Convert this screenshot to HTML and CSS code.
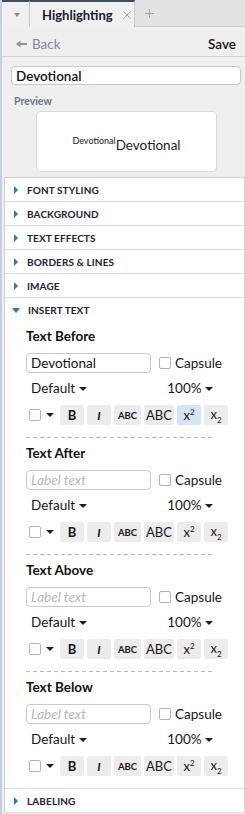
FILE: index.html
```html
<!DOCTYPE html>
<html lang="en">
<head>
    <meta charset="UTF-8">
    <meta name="viewport" content="width=device-width, initial-scale=1.0">
    <title>Highlighting</title>
    <link rel="stylesheet" href="styles.css">
</head>
<body>
    <div class="panel">
        <div class="tabs">
            <div class="tab-menu"><span class="tri-down grey"></span></div>
            <div class="tab active">
                <span>Highlighting</span>
                <svg class="close" width="8" height="8" viewBox="0 0 8 8"><path d="M0.5 0.5 L7.5 7.5 M7.5 0.5 L0.5 7.5" stroke="#a3a3a3" stroke-width="1"/></svg>
            </div>
            <div class="tab-add">
                <svg width="9" height="9" viewBox="0 0 9 9"><path d="M4.5 0 V9 M0 4.5 H9" stroke="#a3a3a3" stroke-width="1"/></svg>
            </div>
        </div>

        <div class="topbar">
            <a class="back">
                <svg width="11" height="8" viewBox="0 0 11 8"><path d="M0 4 L4.5 0.5 V3 H11 V5 H4.5 V7.5 Z" fill="#8794a3"/></svg>
                Back
            </a>
            <span class="save">Save</span>
        </div>

        <input class="name" type="text" value="Devotional">
        <div class="preview-label">Preview</div>
        <div class="preview">
            <span class="sample"><sup>Devotional</sup>Devotional</span>
        </div>

        <div class="sections">
            <div class="section"><div class="section-head"><span class="tri-right"></span>Font Styling</div></div>
            <div class="section"><div class="section-head"><span class="tri-right"></span>Background</div></div>
            <div class="section"><div class="section-head"><span class="tri-right"></span>Text Effects</div></div>
            <div class="section"><div class="section-head"><span class="tri-right"></span>Borders &amp; Lines</div></div>
            <div class="section"><div class="section-head"><span class="tri-right"></span>Image</div></div>

            <div class="section open">
                <div class="section-head"><span class="tri-down blue"></span>Insert Text</div>
                <div class="section-body">

                    <div class="insert">
                        <div class="insert-title">Text Before</div>
                        <div class="insert-row">
                            <input class="label-input" type="text" value="Devotional" placeholder="Label text">
                            <span class="check"></span>
                            <span class="check-label">Capsule</span>
                        </div>
                        <div class="font-row">
                            <span>Default <span class="tri-down"></span></span>
                            <span>100% <span class="tri-down"></span></span>
                        </div>
                        <div class="toolbar">
                            <span class="check"></span><span class="tri-down small"></span>
                            <span class="btn bold">B</span>
                            <span class="btn italic">I</span>
                            <span class="btn caps">ABC</span>
                            <span class="btn upper">ABC</span>
                            <span class="btn script active"><span>x<sup>2</sup></span></span>
                            <span class="btn script"><span>x<sub>2</sub></span></span>
                        </div>
                    </div>

                    <div class="divider"></div>

                    <div class="insert">
                        <div class="insert-title">Text After</div>
                        <div class="insert-row">
                            <input class="label-input" type="text" placeholder="Label text">
                            <span class="check"></span>
                            <span class="check-label">Capsule</span>
                        </div>
                        <div class="font-row">
                            <span>Default <span class="tri-down"></span></span>
                            <span>100% <span class="tri-down"></span></span>
                        </div>
                        <div class="toolbar">
                            <span class="check"></span><span class="tri-down small"></span>
                            <span class="btn bold">B</span>
                            <span class="btn italic">I</span>
                            <span class="btn caps">ABC</span>
                            <span class="btn upper">ABC</span>
                            <span class="btn script"><span>x<sup>2</sup></span></span>
                            <span class="btn script"><span>x<sub>2</sub></span></span>
                        </div>
                    </div>

                    <div class="divider"></div>

                    <div class="insert">
                        <div class="insert-title">Text Above</div>
                        <div class="insert-row">
                            <input class="label-input" type="text" placeholder="Label text">
                            <span class="check"></span>
                            <span class="check-label">Capsule</span>
                        </div>
                        <div class="font-row">
                            <span>Default <span class="tri-down"></span></span>
                            <span>100% <span class="tri-down"></span></span>
                        </div>
                        <div class="toolbar">
                            <span class="check"></span><span class="tri-down small"></span>
                            <span class="btn bold">B</span>
                            <span class="btn italic">I</span>
                            <span class="btn caps">ABC</span>
                            <span class="btn upper">ABC</span>
                            <span class="btn script"><span>x<sup>2</sup></span></span>
                            <span class="btn script"><span>x<sub>2</sub></span></span>
                        </div>
                    </div>

                    <div class="divider"></div>

                    <div class="insert">
                        <div class="insert-title">Text Below</div>
                        <div class="insert-row">
                            <input class="label-input" type="text" placeholder="Label text">
                            <span class="check"></span>
                            <span class="check-label">Capsule</span>
                        </div>
                        <div class="font-row">
                            <span>Default <span class="tri-down"></span></span>
                            <span>100% <span class="tri-down"></span></span>
                        </div>
                        <div class="toolbar">
                            <span class="check"></span><span class="tri-down small"></span>
                            <span class="btn bold">B</span>
                            <span class="btn italic">I</span>
                            <span class="btn caps">ABC</span>
                            <span class="btn upper">ABC</span>
                            <span class="btn script"><span>x<sup>2</sup></span></span>
                            <span class="btn script"><span>x<sub>2</sub></span></span>
                        </div>
                    </div>

                </div>
            </div>

            <div class="section"><div class="section-head"><span class="tri-right"></span>Labeling</div></div>
        </div>
    </div>
</body>
</html>
```

FILE: styles.css
```css
* {
    box-sizing: border-box;
}

body {
    margin: 0;
    font-family: Lato, "Open Sans", sans-serif;
    font-size: 13px;
    color: #1c2230;
    background: #c6cfdf;
    overflow: hidden;
}

.panel {
    margin-left: 2px;
    min-height: 814px;
    background: #efefef;
}

/* tab strip */
.tabs {
    display: flex;
    height: 27px;
    background: #e2e2e2;
}

.tab-menu {
    width: 28px;
    background: #f0f0f0;
    border-top: 2px solid #3f4c5e;
    border-right: 1px solid #c8c8c8;
    display: flex;
    align-items: center;
    justify-content: center;
    padding-left: 2px;
}

.tab {
    width: 105px;
    display: flex;
    align-items: center;
    padding-left: 12px;
    background: #f0f0f0;
    border-top: 2px solid #3f4c5e;
    border-right: 1px solid #c8c8c8;
    font-weight: 700;
    font-size: 13px;
    color: #161c2a;
}

.tab .close {
    flex: none;
    margin-left: 10px;
}

.tab-add {
    flex: 1;
    display: flex;
    align-items: center;
    padding-left: 10px;
    border-bottom: 1px solid #cdcdcd;
}

.topbar {
    height: 30px;
    padding: 4px 9px 0 14px;
    display: flex;
    align-items: center;
    justify-content: space-between;
    border-bottom: 1px solid #d3d3d3;
    font-size: 13.5px;
}

.back {
    color: #7c8999;
    display: flex;
    align-items: center;
    gap: 5px;
}

.save {
    font-weight: 600;
    color: #151515;
}

.name {
    display: block;
    margin: 9px 4px 0 9px;
    width: 230px;
    height: 19px;
    padding: 0 4px;
    border: 1px solid #c9c9c9;
    border-radius: 4px;
    background: white;
    font-family: inherit;
    font-size: 13.5px;
    font-weight: 600;
    color: #111;
    outline: none;
}

.preview-label {
    margin: 9px 0 0 12px;
    line-height: 14px;
    font-size: 10.5px;
    font-weight: 700;
    color: #6c7686;
}

.preview {
    margin: 3px 0 0 34px;
    width: 181px;
    height: 61px;
    background: white;
    border: 1px solid #d9d9d9;
    border-radius: 4px;
    display: flex;
    align-items: center;
    justify-content: center;
}

.sample {
    font-size: 13.5px;
    color: #222;
    padding-top: 4px;
}

.sample sup {
    font-size: 9px;
    vertical-align: 6px;
}

/* accordion */
.sections {
    margin: 5px 0 0 2px;
    background: white;
    border-top: 1px solid #d2d2d2;
    border-left: 1px solid #cfcfcf;
    border-right: 1px solid #d6d6d6;
}

.section-head {
    height: 24px;
    display: flex;
    align-items: center;
    padding-left: 9px;
    border-bottom: 1px solid #dcdcdc;
    text-transform: uppercase;
    font-size: 10px;
    font-weight: 700;
    letter-spacing: 0.1px;
    color: #1c2333;
}

.section.open .section-head {
    border-bottom: none;
    padding-left: 7px;
}

.section.open {
    border-bottom: 1px solid #dcdcdc;
}

.tri-right {
    flex: none;
    width: 0;
    height: 0;
    border-top: 4px solid transparent;
    border-bottom: 4px solid transparent;
    border-left: 4px solid #2a79c9;
    margin-right: 9px;
}

.tri-down {
    flex: none;
    display: inline-block;
    width: 0;
    height: 0;
    border-left: 4px solid transparent;
    border-right: 4px solid transparent;
    border-top: 4px solid #1e1e1e;
    vertical-align: 2px;
}

.tri-down.grey {
    border-left-width: 3.5px;
    border-right-width: 3.5px;
    border-top-color: #8a8a8a;
}

.tri-down.blue {
    border-top: 5px solid #2a79c9;
    margin-right: 8px;
}

.tri-down.small {
    margin-left: 5px;
    margin-right: 6px;
}

.section-body {
    padding: 6px 0 12px 21px;
}

.insert {
    width: 187px;
}

.divider + .insert {
    padding-top: 7px;
}

.insert-title {
    line-height: 16px;
    font-size: 13.5px;
    font-weight: 700;
    color: #111;
}

.insert-row {
    margin-top: 9px;
    display: flex;
    align-items: center;
    white-space: nowrap;
}

.label-input {
    flex: none;
    width: 125px;
    height: 20px;
    padding: 0 4px;
    border: 1px solid #c9c9c9;
    border-radius: 4px;
    font-family: inherit;
    font-size: 13.5px;
    color: #111;
    outline: none;
}

.label-input::placeholder {
    color: #b7b7b7;
    font-style: italic;
}

.check {
    flex: none;
    display: inline-block;
    width: 12px;
    height: 12px;
    border: 1px solid #b3b3b3;
    border-radius: 2px;
    background: white;
}

.insert-row .check {
    margin-left: 8px;
}

.check-label {
    flex: none;
    margin-left: 4px;
    font-size: 13.5px;
    color: #161616;
}

.font-row {
    margin-top: 7px;
    height: 16px;
    line-height: 16px;
    padding-left: 5px;
    display: flex;
    justify-content: space-between;
    font-size: 13.5px;
    color: #161616;
}

.toolbar {
    margin-top: 9px;
    height: 20px;
    padding-left: 3px;
    display: flex;
    align-items: center;
    white-space: nowrap;
}

.btn {
    flex: none;
    width: 24px;
    height: 20px;
    margin-right: 3px;
    display: flex;
    align-items: center;
    justify-content: center;
    background: #ececec;
    border-radius: 2px;
    font-size: 13px;
    color: #161616;
}

.btn.bold {
    font-weight: 700;
}

.btn.italic {
    font-style: italic;
    font-weight: 700;
    font-size: 12px;
}

.btn.caps {
    width: 27px;
    font-size: 9.5px;
    font-weight: 700;
}

.btn.upper {
    width: 30px;
    font-size: 13px;
}

.btn.script sup,
.btn.script sub {
    font-size: 8px;
}

.btn.active {
    background: #d5e5f6;
}

.divider {
    width: 187px;
    height: 1px;
    margin-top: 12px;
    background-image: linear-gradient(to right, #b9b9b9 4px, transparent 4px);
    background-size: 7px 1px;
}
```
